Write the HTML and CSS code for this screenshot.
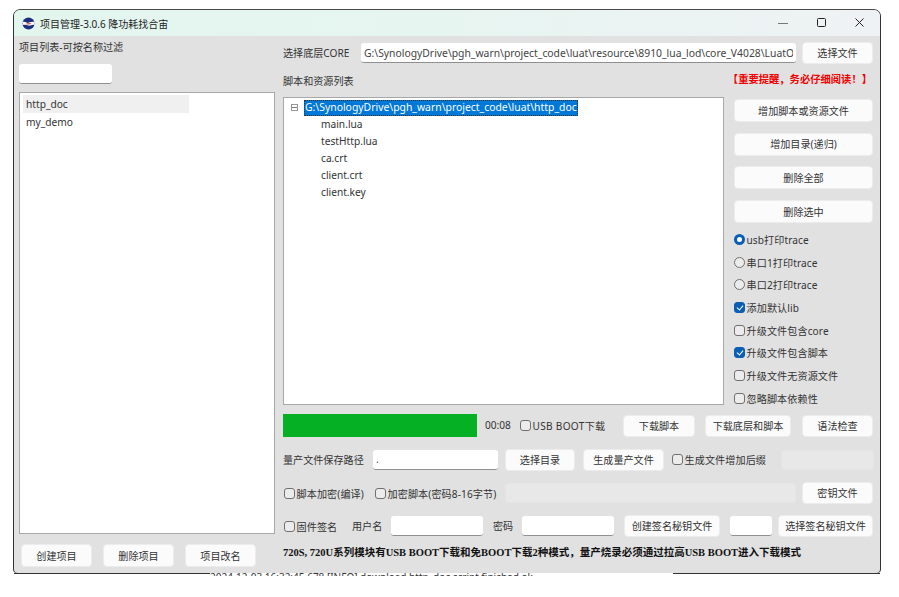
FILE: index.html
```html
<!DOCTYPE html>
<html lang="zh-CN">
<head>
    <meta charset="UTF-8">
    <title>项目管理-3.0.6 降功耗找合宙</title>
    <link rel="stylesheet" href="styles.css">
</head>
<body>
    <div class="window">
        <div class="titlebar">
            <svg class="app-icon" width="13" height="13" viewBox="0 0 13 13">
                <circle cx="6.5" cy="6.5" r="6" fill="#1c2f7c"/>
                <path d="M0.5 5.2 C3 3.8 5 6.8 7 5.6 C9 4.6 11 4.4 12.5 5.2 L12.5 8 C10 7.4 8.5 9 6.5 8.6 C4 8 2 7.4 0.8 8.2 Z" fill="#ffffff"/>
                <path d="M4.4 6.6 L8.6 5.9 L8.6 7.2 L4.4 7.6 Z" fill="#d8352f"/>
            </svg>
            <span class="title">项目管理-3.0.6 降功耗找合宙</span>
            <div class="controls">
                <svg width="12" height="12" viewBox="0 0 12 12"><path d="M1 6.5 H11" stroke="#777" stroke-width="1" fill="none"/></svg>
                <svg width="12" height="12" viewBox="0 0 12 12"><rect x="2.5" y="1.5" width="8" height="8" rx="1" stroke="#222" stroke-width="1" fill="none"/></svg>
                <svg width="12" height="12" viewBox="0 0 12 12"><path d="M2.5 1.5 L10.5 9.5 M10.5 1.5 L2.5 9.5" stroke="#222" stroke-width="1" fill="none"/></svg>
            </div>
        </div>

        <div class="main">
            <div class="left">
                <div class="left-label">项目列表-可按名称过滤</div>
                <input type="text" class="field filter">
                <div class="project-list">
                    <div class="project selected">http_doc</div>
                    <div class="project">my_demo</div>
                </div>
                <div class="left-buttons">
                    <button class="btn">创建项目</button>
                    <button class="btn">删除项目</button>
                    <button class="btn">项目改名</button>
                </div>
            </div>

            <div class="right">
                <div class="row core-row">
                    <span class="label core-label">选择底层CORE</span>
                    <input type="text" class="field core-path" value="G:\SynologyDrive\pgh_warn\project_code\luat\resource\8910_lua_lod\core_V4028\LuatOS-Air_V4028_RDA8910.pac">
                    <button class="btn w71">选择文件</button>
                </div>
                <div class="row list-head">
                    <span class="label">脚本和资源列表</span>
                    <span class="warning">【重要提醒，务必仔细阅读！】</span>
                </div>

                <div class="work">
                    <div class="tree">
                        <div class="tree-root">
                            <span class="minus"></span>
                            <span class="tree-selected">G:\SynologyDrive\pgh_warn\project_code\luat\http_doc</span>
                        </div>
                        <div class="tree-item">main.lua</div>
                        <div class="tree-item">testHttp.lua</div>
                        <div class="tree-item">ca.crt</div>
                        <div class="tree-item">client.crt</div>
                        <div class="tree-item">client.key</div>
                    </div>
                    <div class="side">
                        <div class="side-buttons">
                            <button class="btn">增加脚本或资源文件</button>
                            <button class="btn">增加目录(递归)</button>
                            <button class="btn">删除全部</button>
                            <button class="btn">删除选中</button>
                        </div>
                        <div class="options">
                            <label class="opt"><input type="radio" name="trace" checked>usb打印trace</label>
                            <label class="opt"><input type="radio" name="trace">串口1打印trace</label>
                            <label class="opt"><input type="radio" name="trace">串口2打印trace</label>
                            <label class="opt"><input type="checkbox" checked>添加默认lib</label>
                            <label class="opt"><input type="checkbox">升级文件包含core</label>
                            <label class="opt"><input type="checkbox" checked>升级文件包含脚本</label>
                            <label class="opt"><input type="checkbox">升级文件无资源文件</label>
                            <label class="opt"><input type="checkbox">忽略脚本依赖性</label>
                        </div>
                    </div>
                </div>

                <div class="row progress-row">
                    <div class="progress"></div>
                    <span class="label time">00:08</span>
                    <label class="opt usb-boot"><input type="checkbox">USB BOOT下载</label>
                    <button class="btn w72">下载脚本</button>
                    <button class="btn w86">下载底层和脚本</button>
                    <button class="btn w71">语法检查</button>
                </div>

                <div class="row save-row">
                    <span class="label save-label">量产文件保存路径</span>
                    <input type="text" class="field save-path" value=".">
                    <button class="btn w70">选择目录</button>
                    <button class="btn w81">生成量产文件</button>
                    <label class="opt suffix"><input type="checkbox">生成文件增加后缀</label>
                    <input type="text" class="field off suffix-field" disabled>
                </div>

                <div class="row encrypt-row">
                    <label class="opt enc1"><input type="checkbox">脚本加密(编译)</label>
                    <label class="opt enc2"><input type="checkbox">加密脚本(密码8-16字节)</label>
                    <input type="text" class="field off enc-field" disabled>
                    <button class="btn w71">密钥文件</button>
                </div>

                <div class="row sign-row">
                    <label class="opt sign"><input type="checkbox">固件签名</label>
                    <span class="label user-label">用户名</span>
                    <input type="text" class="field w92">
                    <span class="label pass-label">密码</span>
                    <input type="text" class="field w92">
                    <button class="btn w96">创建签名秘钥文件</button>
                    <input type="text" class="field w42">
                    <button class="btn w95">选择签名秘钥文件</button>
                </div>

                <div class="notice">720S, 720U系列模块有USB BOOT下载和免BOOT下载2种模式，量产烧录必须通过拉高USB BOOT进入下载模式</div>
            </div>
        </div>
    </div>
    <div class="under">
        <div class="edge w196"></div>
        <div class="behind">2024-12-03 16:32:45.678 [INFO] download http_doc script finished ok</div>
        <div class="edge w207"></div>
    </div>
</body>
</html>
```

FILE: styles.css
```css
* {
    margin: 0;
    padding: 0;
    box-sizing: border-box;
}

body {
    background: white;
    font-family: "Noto Sans", "Noto Sans CJK SC", sans-serif;
    font-size: 10.1px;
    color: #333;
}

.window {
    width: 866px;
    height: 563px;
    margin: 10px 0 0 14px;
    background: #e1e1e1;
    border-radius: 6px 6px 4px 4px;
    box-shadow: 0 -1px 0 #4a4a4a, -1px 0 0 #333, 1px 0 0 #333;
    overflow: hidden;
}

.titlebar {
    height: 26px;
    display: flex;
    align-items: center;
    padding-left: 8px;
    background: linear-gradient(90deg, #e2f6ee 0%, #e6f5f0 45%, #eff2f4 100%);
}

.app-icon {
    margin-right: 5px;
}

.title {
    color: #222;
    font-size: 10px;
}

.controls {
    margin-left: auto;
    display: flex;
    gap: 26px;
    padding-right: 15px;
}

.main {
    display: flex;
    height: 537px;
}

.left {
    margin-left: 5px;
    margin-right: 8px;
    width: 256px;
    display: flex;
    flex-direction: column;
    padding-top: 4px;
}

.left-label {
    height: 14px;
    line-height: 14px;
}

.filter {
    width: 93px;
    height: 21px;
    margin-top: 10px;
}

.project-list {
    flex: 1;
    margin-top: 8px;
    padding: 2px 3px;
    background: white;
    border: 1px solid #a8a8a8;
}

.project {
    height: 18px;
    line-height: 18px;
    padding-left: 3px;
    width: 166px;
    font-size: 10.2px;
}

.project.selected {
    background: #f0f0f0;
}

.left-buttons {
    display: flex;
    gap: 11px;
    padding: 10px 0 6px 2px;
}

.left-buttons .btn {
    width: 71px;
    height: 23px;
}

.btn {
    height: 22px;
    flex: none;
    padding-bottom: 1px;
    background: #fbfbfb;
    border: 1px solid #ececec;
    border-radius: 4px;
    font-family: inherit;
    font-size: 10.1px;
    color: #333;
}

.field {
    height: 20px;
    flex: none;
    background: white;
    border: none;
    border-bottom: 1px solid #8f8f8f;
    border-radius: 3px;
    padding: 0 3px;
    font-family: inherit;
    font-size: 10.35px;
    color: #444;
    outline: none;
}

.field.off {
    background: #e8e8e8;
    border: 1px solid #e5e5e5;
}

.right {
    width: 591px;
    padding-top: 6px;
}

.row {
    display: flex;
    align-items: center;
}

.label {
    flex: none;
    padding-bottom: 1px;
}

.core-row {
    height: 22px;
}

.core-label {
    width: 78px;
}

.core-path {
    width: 435px;
    margin-right: 6px;
}

.list-head {
    height: 16px;
    margin-top: 9px;
    justify-content: space-between;
    padding-right: 2px;
}

.warning {
    margin-bottom: 5px;
    font-family: "Liberation Serif", "Noto Sans CJK SC", serif;
    font-weight: bold;
    font-size: 10.3px;
    color: #f00000;
}

.work {
    display: flex;
    gap: 10px;
    margin-top: 8px;
}

.tree {
    width: 441px;
    height: 308px;
    flex: none;
    background: white;
    border: 1px solid #a8a8a8;
    padding-top: 1px;
}

.tree-root {
    height: 17px;
    display: flex;
    align-items: center;
    padding-left: 7px;
}

.minus {
    width: 7px;
    height: 7px;
    margin-right: 6px;
    border: 1px solid #9a9a9a;
    background: linear-gradient(#777, #777) center / 5px 1px no-repeat;
}

.tree-selected {
    height: 16px;
    line-height: 15px;
    padding: 0 1px;
    background: #0078d7;
    color: white;
    outline: 1px dotted #333;
    outline-offset: -1px;
    font-size: 10.4px;
}

.tree-item {
    height: 17px;
    line-height: 16px;
    padding-left: 37px;
    font-size: 10.2px;
}

.side {
    width: 140px;
    padding-top: 2px;
}

.side-buttons {
    display: flex;
    flex-direction: column;
    gap: 10.7px;
}

.side-buttons .btn {
    width: 139px;
    height: 23px;
}

.options {
    display: flex;
    flex-direction: column;
    gap: 8.66px;
    margin-top: 9.5px;
}

.opt {
    display: flex;
    align-items: center;
    gap: 1.5px;
    height: 14px;
    flex: none;
    white-space: nowrap;
    letter-spacing: 0.1px;
}

.opt input {
    appearance: none;
    position: relative;
    width: 11px;
    height: 11px;
    flex: none;
    background: #ececec;
    border: 1px solid #707070;
    border-radius: 3px;
}

.opt input[type="radio"] {
    border-radius: 50%;
}

.opt input[type="radio"]:checked {
    background: white;
    border: 3.5px solid #0a5fb4;
}

.opt input[type="checkbox"]:checked {
    background: #0a5fb4;
    border-color: #0a5fb4;
}

.opt input[type="checkbox"]:checked::after {
    content: "";
    position: absolute;
    left: 2.5px;
    top: 1px;
    width: 3px;
    height: 5px;
    border: solid white;
    border-width: 0 1px 1px 0;
    transform: rotate(40deg);
}

.progress-row {
    height: 23px;
    margin-top: 9px;
}

.progress {
    width: 194px;
    height: 23px;
    background: #06b025;
}

.time {
    margin-left: 8px;
    width: 35px;
}

.usb-boot {
    width: 103px;
    letter-spacing: 0.3px;
}

.progress-row .btn {
    margin-right: 10px;
}

.progress-row .btn:last-child {
    margin-right: 0;
    margin-left: 1px;
}

.save-row {
    height: 21px;
    margin-top: 12px;
}

.save-label {
    width: 90px;
}

.save-path {
    width: 125px;
    margin-right: 7px;
}

.save-row .w70 {
    margin-right: 8px;
}

.save-row .w81 {
    margin-right: 8px;
}

.suffix {
    width: 109px;
}

.suffix-field {
    width: 93px;
}

.encrypt-row {
    height: 22px;
    margin-top: 12px;
}

.enc1 {
    width: 91px;
    padding-left: 1px;
}

.enc2 {
    width: 131px;
    padding-left: 1px;
}

.enc-field {
    width: 291px;
    margin-right: 6px;
}

.sign-row {
    height: 22px;
    margin-top: 11px;
}

.sign {
    width: 69px;
    padding-left: 1px;
}

.user-label {
    width: 39px;
}

.pass-label {
    width: 39px;
    padding-left: 10px;
}

.sign-row .btn {
    margin-left: 10px;
}

.sign-row .field.w42 {
    margin-left: 10px;
}

.sign-row .w95 {
    margin-left: 6px;
}

.notice {
    margin-top: 8px;
    height: 16px;
    line-height: 15px;
    font-family: "Liberation Serif", "Noto Sans CJK SC", serif;
    font-weight: bold;
    font-size: 10.5px;
    color: #111;
    white-space: nowrap;
}

.w42 { width: 42px; }
.w70 { width: 70px; }
.w71 { width: 71px; }
.w72 { width: 72px; }
.w81 { width: 81px; }
.w86 { width: 86px; }
.w92 { width: 92px; }
.w95 { width: 95px; }
.w96 { width: 96px; }

.under {
    display: flex;
    margin-left: 14px;
    width: 866px;
    height: 4px;
    overflow: hidden;
}

.edge {
    height: 1px;
    flex: none;
    background: #333;
}

.w196 { width: 196px; }
.w207 { width: 207px; }

.behind {
    width: 463px;
    flex: none;
    height: 3px;
    overflow: hidden;
    white-space: nowrap;
    font-size: 10px;
    line-height: 9px;
    color: #333;
}
```
